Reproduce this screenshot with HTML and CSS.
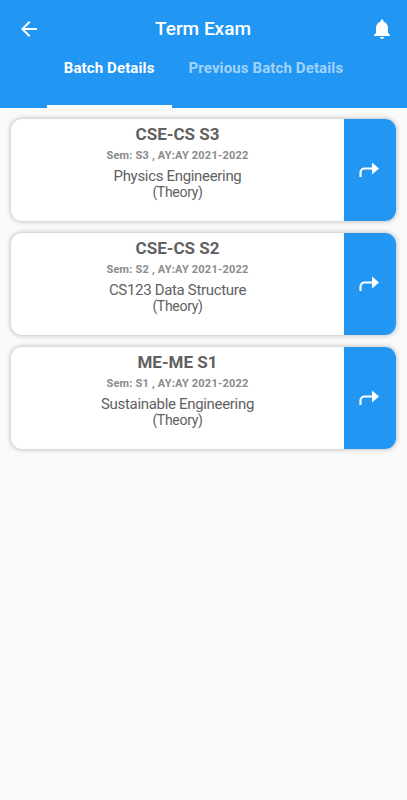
FILE: index.html
```
<!DOCTYPE html>
<html lang="en">
<head>
    <meta charset="UTF-8">
    <meta name="viewport" content="width=device-width, initial-scale=1.0">
    <title>Term Exam</title>
    <link rel="stylesheet" href="styles.css">
</head>
<body>
    <header class="header">
        <div class="app-bar">
            <svg class="back" viewBox="0 0 24 24"><path d="M20 11H7.83l5.59-5.59L12 4l-8 8 8 8 1.41-1.41L7.83 13H20v-2z"/></svg>
            <h1 class="title">Term Exam</h1>
            <svg class="bell" viewBox="0 0 24 24"><path d="M12 22c1.1 0 2-.9 2-2h-4c0 1.1.89 2 2 2zm6-6v-5c0-3.07-1.64-5.64-4.5-6.32V4c0-.83-.67-1.5-1.5-1.5s-1.5.67-1.5 1.5v.68C7.63 5.36 6 7.92 6 11v5l-2 2v1h16v-1l-2-2z"/></svg>
        </div>
        <nav class="tabs">
            <div class="tab active">Batch Details</div>
            <div class="tab">Previous Batch Details</div>
        </nav>
    </header>

    <main class="list">
        <div class="card">
            <div class="info">
                <h2 class="batch">CSE-CS S3</h2>
                <div class="sem">Sem: S3 , AY:AY 2021-2022</div>
                <div class="subject">Physics Engineering</div>
                <div class="type">(Theory)</div>
            </div>
            <div class="go">
                <svg class="arrow" viewBox="0 0 20 16"><path class="line" d="M1.5 15V10.5a4 4 0 0 1 4-4H14"/><path class="head" d="M13 0.5L20 6.5L13 12.5z"/></svg>
            </div>
        </div>
        <div class="card">
            <div class="info">
                <h2 class="batch">CSE-CS S2</h2>
                <div class="sem">Sem: S2 , AY:AY 2021-2022</div>
                <div class="subject">CS123 Data Structure</div>
                <div class="type">(Theory)</div>
            </div>
            <div class="go">
                <svg class="arrow" viewBox="0 0 20 16"><path class="line" d="M1.5 15V10.5a4 4 0 0 1 4-4H14"/><path class="head" d="M13 0.5L20 6.5L13 12.5z"/></svg>
            </div>
        </div>
        <div class="card">
            <div class="info">
                <h2 class="batch">ME-ME S1</h2>
                <div class="sem">Sem: S1 , AY:AY 2021-2022</div>
                <div class="subject">Sustainable Engineering</div>
                <div class="type">(Theory)</div>
            </div>
            <div class="go">
                <svg class="arrow" viewBox="0 0 20 16"><path class="line" d="M1.5 15V10.5a4 4 0 0 1 4-4H14"/><path class="head" d="M13 0.5L20 6.5L13 12.5z"/></svg>
            </div>
        </div>
    </main>
</body>
</html>
```
FILE: styles.css
```
* {
    box-sizing: border-box;
}
body {
    font-family: Roboto, sans-serif;
    background-color: #fafafa;
    min-height: 100vh;
    margin: 0;
}
.header {
    height: 108px;
    background-color: #2196f3;
    color: #fff;
}
.app-bar {
    display: flex;
    align-items: center;
    height: 58px;
    padding: 0 13px 0 17px;
}
.back,
.bell {
    width: 24px;
    height: 24px;
    fill: #fff;
}
.title {
    flex: 1;
    margin: 0;
    padding: 0 5px 2px 0;
    font-size: 19px;
    font-weight: 500;
    text-align: center;
}
.tabs {
    display: flex;
    justify-content: center;
    height: 50px;
}
.tab {
    padding: 0 17px;
    font-size: 15px;
    font-weight: 700;
    letter-spacing: 0.12px;
    line-height: 20px;
    color: #a1d3fa;
    border-bottom: 3px solid transparent;
    white-space: nowrap;
}
.tab.active {
    color: #fff;
    border-bottom-color: #fff;
}
.list {
    display: flex;
    flex-direction: column;
    gap: 12px;
    padding: 11px 11px 20px;
}
.card {
    display: flex;
    height: 102px;
    background-color: #fff;
    border-radius: 11px;
    box-shadow: 0 0 4px 1px #c4c4c4;
    overflow: hidden;
}
.info {
    flex: 1;
    text-align: center;
    color: #616161;
}
.batch {
    margin: 5px 0 0;
    font-size: 17px;
    font-weight: 700;
    line-height: 20px;
}
.sem {
    margin-top: 5px;
    font-size: 11px;
    font-weight: 700;
    letter-spacing: 0.2px;
    line-height: 14px;
    color: #8a8a8a;
}
.subject {
    margin-top: 5px;
    font-size: 15px;
    letter-spacing: -0.32px;
    line-height: 17px;
}
.type {
    font-size: 14px;
    letter-spacing: -0.3px;
    line-height: 15px;
}
.go {
    display: flex;
    justify-content: center;
    align-items: center;
    width: 52px;
    padding-right: 2px;
    background-color: #2196f3;
}
.arrow {
    width: 20px;
    height: 16px;
}
.line {
    fill: none;
    stroke: #fff;
    stroke-width: 2.2;
}
.head {
    fill: #fff;
}
```
